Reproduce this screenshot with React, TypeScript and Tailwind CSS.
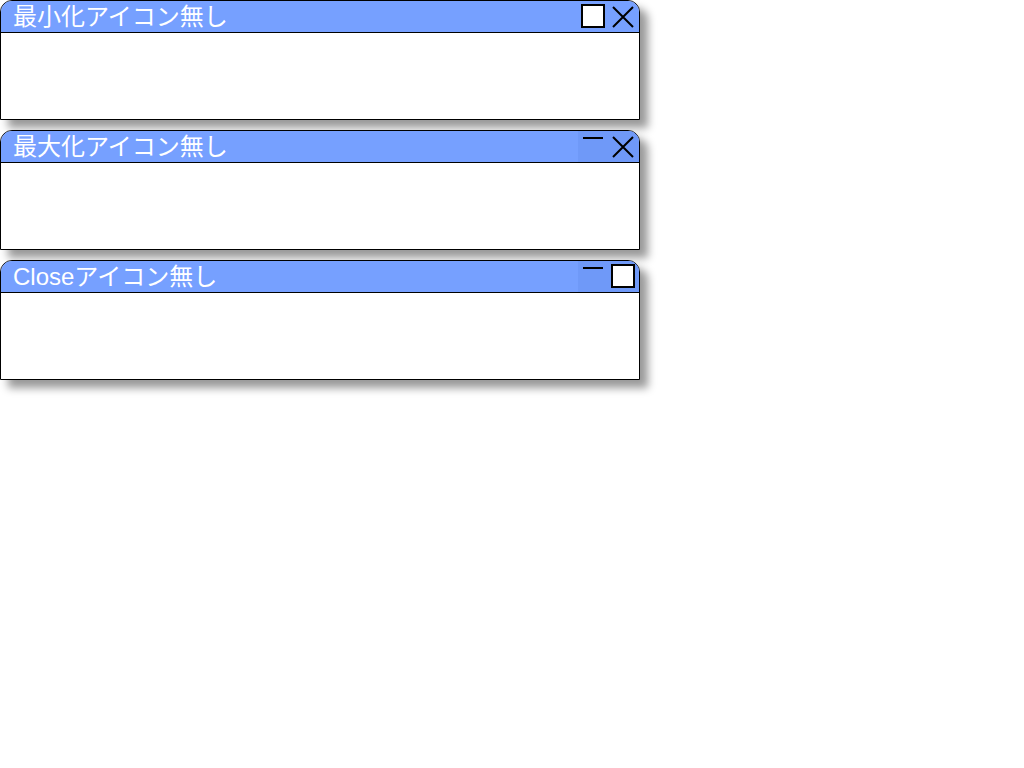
import React from 'react';

type Btn = 'min' | 'max' | 'close';

const windows: { title: string; buttons: Btn[] }[] = [
  { title: '最小化アイコン無し', buttons: ['max', 'close'] },
  { title: '最大化アイコン無し', buttons: ['min', 'close'] },
  { title: 'Closeアイコン無し', buttons: ['min', 'max'] },
];

function Icon({ kind }: { kind: Btn }) {
  if (kind === 'min') {
    return (
      <div className="w-[30px] h-[31px] flex justify-center">
        <div className="mt-[6px] w-[20px] h-[2px] bg-black" />
      </div>
    );
  }
  if (kind === 'max') {
    return (
      <div className="w-[30px] h-[31px] flex items-start justify-center pt-[3px]">
        <div className="w-[24px] h-[24px] border-2 border-black bg-white" />
      </div>
    );
  }
  return (
    <div className="w-[30px] h-[31px] flex items-start justify-center pt-[5px]">
      <svg width="24" height="24" viewBox="0 0 24 24">
        <path d="M2 1 L22 21 M22 1 L2 21" stroke="black" strokeWidth="2" />
      </svg>
    </div>
  );
}

export default function App() {
  return (
    <div className="w-[1024px] h-[768px] bg-white flex flex-col gap-[10px] font-['Liberation_Sans','Noto_Sans_CJK_JP',sans-serif]">
      {windows.map((w, i) => (
        <div
          key={i}
          className="w-[640px] h-[120px] border border-black rounded-t-[12px] bg-white flex flex-col shadow-[8px_8px_8px_rgba(0,0,0,0.4)]"
        >
          <div className="h-[32px] bg-[#76a0ff] rounded-t-[11px] border-b border-black flex items-stretch justify-between">
            <div className="pl-[12px] pt-[2px] text-white text-[24px] leading-[28px] whitespace-nowrap">{w.title}</div>
            <div className={`flex pr-[1px] ${i === 0 ? '' : 'bg-[#6f99f8]'} rounded-tr-[11px]`}>
              {w.buttons.map((b) => (
                <Icon key={b} kind={b} />
              ))}
            </div>
          </div>
          <div className="flex-1" />
        </div>
      ))}
    </div>
  );
}
